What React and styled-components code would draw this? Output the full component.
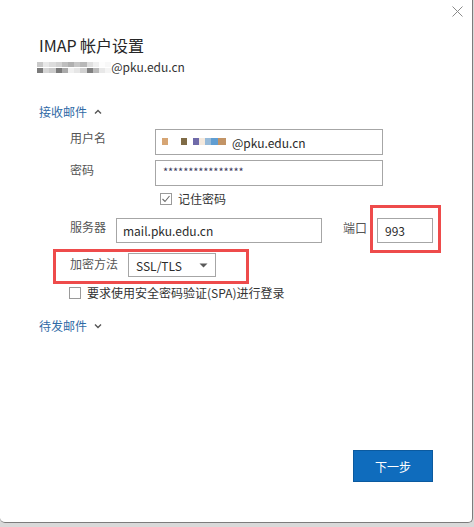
import React from "react";
import styled, { createGlobalStyle } from "styled-components";

const Global = createGlobalStyle`
  html, body { margin: 0; padding: 0; background: #d9d9d9; }
  body { font-family: "Noto Sans CJK SC", "Noto Sans", sans-serif; }
  * { box-sizing: border-box; }
`;

const Window = styled.div`
  width: 473px;
  height: 523px;
  background: #fff;
  border-right: 1px solid #7c7c7c;
  border-bottom: 1px solid #7c7c7c;
  border-radius: 0 0 5px 5px;
  display: flex;
  flex-direction: column;
  position: relative;
`;

const CloseRow = styled.div`
  display: flex;
  justify-content: flex-end;
  padding: 6px 9px 0 0;
  height: 16px;
`;

const Body = styled.div`
  padding-left: 39px;
  display: flex;
  flex-direction: column;
`;

const Title = styled.div`
  margin-top: 18px;
  font-size: 16px;
  line-height: 22px;
  color: #262626;
`;

const EmailLine = styled.div`
  display: flex;
  align-items: center;
  margin-left: -2px;
  margin-top: 2px;
  font-size: 12px;
  line-height: 18px;
  color: #333;
`;

const Mosaic = styled.div`
  display: grid;
  grid-template-columns: repeat(12, 6.2px);
  grid-auto-rows: 5px;
  row-gap: 1px;
`;

const Cell = styled.span`
  background: ${(p) => p.$c};
`;

const SectionToggle = styled.div`
  display: flex;
  align-items: center;
  gap: 7px;
  font-size: 12px;
  line-height: 16px;
  color: #2f6aa6;
  margin-top: ${(p) => p.$mt}px;
`;

const Form = styled.div`
  position: relative;
  padding-left: 70px;
  display: flex;
  flex-direction: column;
`;

const Row = styled.div`
  display: flex;
  align-items: flex-start;
  margin-top: ${(p) => p.$mt || 0}px;
`;

const Label = styled.div`
  width: ${(p) => p.$w}px;
  margin-left: ${(p) => p.$ml || 0}px;
  flex: none;
  font-size: 12px;
  line-height: 16px;
  padding-top: ${(p) => p.$pt ?? 1}px;
  color: #555;
`;

const Field = styled.div`
  width: ${(p) => p.$w}px;
  height: ${(p) => p.$h || 26}px;
  flex: none;
  border: 1px solid #a6a6a6;
  background: #fff;
  display: flex;
  align-items: center;
  padding-left: ${(p) => p.$pl || 7}px;
  font-size: 12px;
  color: #2b2b2b;
  white-space: nowrap;
  overflow: hidden;
`;

const Pwd = styled.span`
  font-size: 11px;
  letter-spacing: -0.1px;
  color: #3a3a5a;
  position: relative;
  top: -2px;
`;

const UserMosaic = styled.div`
  display: flex;
  height: 7px;
  margin-right: 6px;
  position: relative;
  top: -1px;
`;

const Chip = styled.span`
  width: ${(p) => p.$w}px;
  height: 100%;
  background: ${(p) => p.$c};
`;

const Select = styled.div`
  width: 88px;
  height: 24px;
  flex: none;
  border: 1px solid #a6a6a6;
  background: #fff;
  display: flex;
  align-items: center;
  justify-content: space-between;
  padding: 0 7px;
  font-size: 12px;
  color: #2b2b2b;
`;

const CheckRow = styled.div`
  display: flex;
  align-items: center;
  gap: 6px;
  font-size: 12px;
  line-height: 16px;
  color: #333;
  margin-left: ${(p) => p.$ml || 0}px;
  margin-top: ${(p) => p.$mt || 0}px;
`;

const Box = styled.span`
  width: 12px;
  height: 12px;
  border: 1px solid #9a9a9a;
  background: #fff;
  display: flex;
  align-items: center;
  justify-content: center;
  flex: none;
`;

const Highlight = styled.div`
  position: absolute;
  left: ${(p) => p.$x}px;
  top: ${(p) => p.$y}px;
  width: ${(p) => p.$w}px;
  height: ${(p) => p.$h}px;
  border: 3px solid #ee4b4b;
  pointer-events: none;
`;

const Footer = styled.div`
  margin-top: auto;
  display: flex;
  justify-content: flex-end;
  padding: 0 39px 40px 0;
`;

const Button = styled.button`
  width: 80px;
  height: 32px;
  background: #0f6cbd;
  border: 1px solid #0b5a9f;
  color: #fff;
  font-family: inherit;
  font-size: 12px;
  padding: 0;
`;

const headerCells = [
  ["#c9c9c9", "#e8e8e8", "#dcdcdc", "#d2d2d2", "#bebebe", "#b0b0b0", "#c6c6c6", "#b8b8b8", "#dfdfdf", "#efefef", "#fdfdfd", "#f8f8f8"],
  ["#7b7b7b", "#d6d6d6", "#cacaca", "#7a7a7a", "#aaaaaa", "#f0f0f0", "#e6e6e6", "#d0d0d0", "#808080", "#bababa", "#e8e8e8", "#f4f4f4"],
];

const userChips = [
  [6, "#d6a574"],
  [13, "transparent"],
  [6, "#7f6b46"],
  [6, "transparent"],
  [6, "#6f6aa9"],
  [6, "#f4e9dd"],
  [6, "#96bad9"],
  [7, "#609ed2"],
  [8, "#c29466"],
];

const Chevron = ({ up }) => (
  <svg width="8" height="6" viewBox="0 0 8 6">
    <path
      d={up ? "M1 4.5 L4 1.5 L7 4.5" : "M1 1.5 L4 4.5 L7 1.5"}
      fill="none"
      stroke="#555"
      strokeWidth="1.4"
    />
  </svg>
);

export default function App() {
  return (
    <>
      <Global />
      <Window>
        <CloseRow>
          <svg width="11" height="11" viewBox="0 0 11 11">
            <path d="M0.5 0.5 L10.5 10.5 M10.5 0.5 L0.5 10.5" stroke="#8a8a8a" strokeWidth="1" />
          </svg>
        </CloseRow>
        <Body>
          <Title>IMAP 帐户设置</Title>
          <EmailLine>
            <Mosaic>
              {headerCells.flat().map((c, i) => (
                <Cell key={i} $c={c} />
              ))}
            </Mosaic>
            <span>@pku.edu.cn</span>
          </EmailLine>
          <SectionToggle $mt={28}>
            接收邮件 <Chevron up />
          </SectionToggle>
        </Body>
        <Form>
          <Row $mt={9}>
            <Label $w={85} $pt={1}>用户名</Label>
            <Field $w={228} $pl={6}>
              <UserMosaic>
                {userChips.map(([w, c], i) => (
                  <Chip key={i} $w={w} $c={c} />
                ))}
              </UserMosaic>
              @pku.edu.cn
            </Field>
          </Row>
          <Row $mt={5}>
            <Label $w={85} $pt={2}>密码</Label>
            <Field $w={228} $pl={7}>
              <Pwd>****************</Pwd>
            </Field>
          </Row>
          <CheckRow $ml={90} $mt={5}>
            <Box>
              <svg width="10" height="10" viewBox="0 0 10 10">
                <path d="M1.5 5 L4 7.5 L8.5 2" fill="none" stroke="#6a6a6a" strokeWidth="1.1" />
              </svg>
            </Box>
            记住密码
          </CheckRow>
          <Row $mt={11}>
            <Label $w={46} $pt={1}>服务器</Label>
            <Field $w={206} $h={25} $pl={6}>mail.pku.edu.cn</Field>
            <Label $w={34} $pt={2} $ml={21}>端口</Label>
            <Field $w={56} $h={25} $pl={7}>993</Field>
          </Row>
          <Row $mt={10}>
            <Label $w={58} $pt={3}>加密方法</Label>
            <Select>
              <span>SSL/TLS</span>
              <svg width="9" height="5" viewBox="0 0 9 5">
                <path d="M0.5 0.5 L8.5 0.5 L4.5 4.5 Z" fill="#5a5a5a" />
              </svg>
            </Select>
          </Row>
          <CheckRow $ml={-1} $mt={8}>
            <Box />
            要求使用安全密码验证(SPA)进行登录
          </CheckRow>
          <Highlight $x={370} $y={85} $w={71} $h={48} />
          <Highlight $x={53} $y={129} $w={196} $h={35} />
        </Form>
        <Body>
          <SectionToggle $mt={17}>
            待发邮件 <Chevron />
          </SectionToggle>
        </Body>
        <Footer>
          <Button>下一步</Button>
        </Footer>
      </Window>
    </>
  );
}
